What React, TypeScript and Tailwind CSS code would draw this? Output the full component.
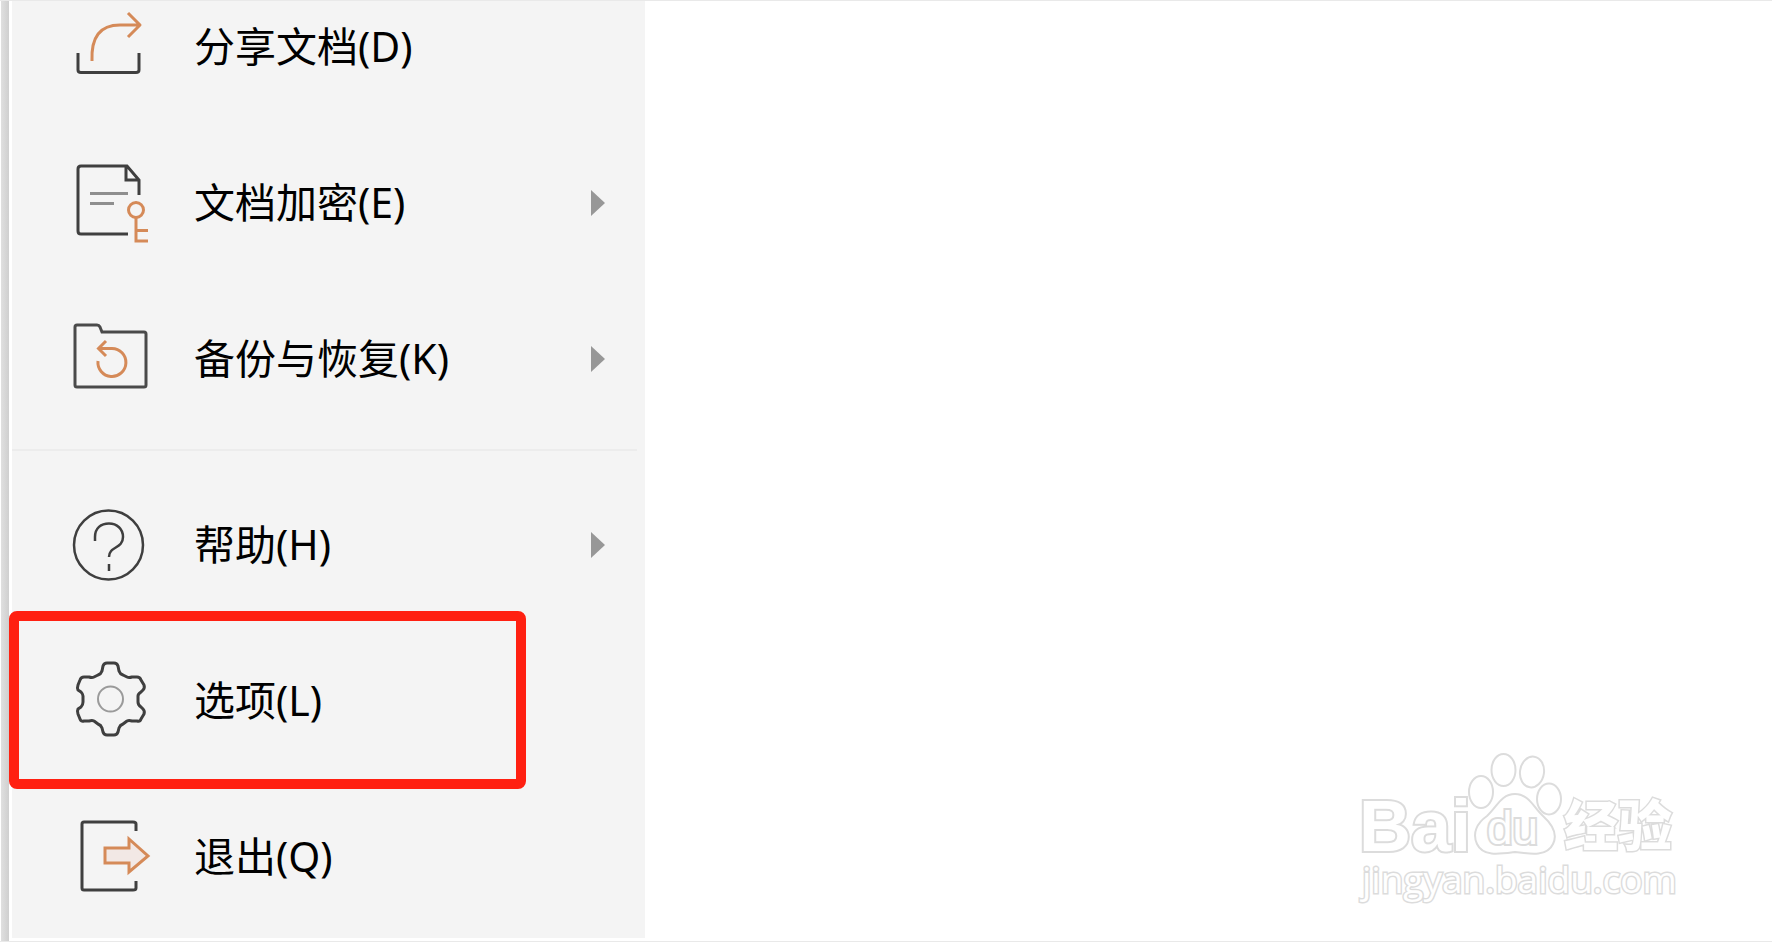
import { ReactNode } from "react"

const ink = "#3f3f3f"
const orange = "#d58a58"

function ShareIcon() {
  return (
    <svg viewBox="0 -4 120 100" className="h-[100px] w-[120px]" fill="none" strokeWidth="3" strokeLinejoin="round">
      <path d="M28 52V69Q28 71.500 31 71.500H86Q89 71.500 89 69V52" stroke={ink} />
      <path d="M42 60C41 36 50 24 70 24H90M78 12L90 24L78 36" stroke={orange} />
    </svg>
  )
}

function EncryptIcon() {
  return (
    <svg viewBox="0 3 120 100" className="h-[100px] w-[120px]" fill="none" strokeWidth="3">
      <path d="M78 84H31Q28 84 28 81V19Q28 16 31 16H77L89 30V45M76 16V30H89" stroke={ink} />
      <path d="M40 43.500H78M40 53.500H64" stroke="#8e8e8e" />
      <circle cx="86" cy="60" r="7.500" stroke={orange} />
      <path d="M86 67V91H98M86 80.500H98" stroke={orange} />
    </svg>
  )
}

function BackupIcon() {
  return (
    <svg viewBox="0 -1 120 100" className="h-[100px] w-[120px]" fill="none" strokeWidth="3">
      <path d="M27 15H47Q49 15 50 17L52 22H94Q96 22 96 24V75Q96 77 94 77H27Q25 77 25 75V17Q25 15 27 15Z" stroke="#4a4a4a" />
      <path d="M48 51A14 14 0 1 0 62 38.500H49M56 31L48.500 38.500L56 46" stroke={orange} />
    </svg>
  )
}

function HelpIcon() {
  return (
    <svg viewBox="0 0 120 100" className="h-[100px] w-[120px]" fill="none" strokeWidth="2.500">
      <circle cx="58.500" cy="50" r="34.500" stroke={ink} />
      <path d="M45 46V42C45 33 51 28.500 59 28.500C67 28.500 73 34 73 42C73 54 59 51 59 62M59 69V76" stroke={ink} />
    </svg>
  )
}

function GearIcon() {
  return (
    <svg viewBox="0 1 120 100" className="h-[100px] w-[120px]" fill="none" strokeWidth="3" strokeLinejoin="round">
      <path
        d="M57 13H64Q67 13 68 16L69 21Q70 24 73 25L77 27Q79 28 82 27L87 27Q90 27 91 30L94 35Q95 38 93 40L91 42Q88 44 88 46V52Q88 55 91 57L93 59Q95 61 94 64L91 69Q90 72 87 71L82 71Q79 70 77 71L73 74Q70 75 69 78L68 82Q67 85 64 85H57Q54 85 53 82L52 78Q51 75 48 74L44 71Q42 70 39 71L34 71Q31 72 30 69L28 64Q27 61 28 59L31 57Q33 55 33 52V46Q33 44 31 42L28 40Q27 38 28 35L30 30Q31 27 34 27L39 27Q42 28 44 27L48 25Q51 24 52 21L53 16Q54 13 57 13Z"
        stroke={ink}
      />
      <circle cx="60.500" cy="49" r="12.500" stroke="#9a9a9a" strokeWidth="2" />
    </svg>
  )
}

function ExitIcon() {
  return (
    <svg viewBox="0 0 120 100" className="h-[100px] w-[120px]" fill="none" strokeWidth="3">
      <path d="M86 24V17Q86 15 83 15H34Q32 15 32 17V81Q32 83 34 83H83Q86 83 86 81V74" stroke={ink} />
      <path d="M55 41H79V32L98 49L79 65V56H55Z" stroke={orange} fill="#f2e8e5" />
    </svg>
  )
}

function MenuItem({ icon, label, submenu, active }: { icon: ReactNode; label: string; submenu?: boolean; active?: boolean }) {
  return (
    <li className="relative">
      <button type="button" className="flex h-[156px] w-full items-center pl-[38px] pr-10 text-left">
        {icon}
        <span className="ml-6 flex-1 whitespace-nowrap pb-[2px] text-[41px] leading-[56px] text-black">{label}</span>
        {submenu && (
          <svg viewBox="0 0 14 26" className="h-[26px] w-[14px]">
            <path d="M0 0L14 13L0 26Z" fill="#979797" />
          </svg>
        )}
      </button>
      {active && <span className="pointer-events-none absolute -top-3 -left-[3px] h-[178px] w-[517px] rounded-lg border-10 border-[#ff2011]" />}
    </li>
  )
}

function Watermark() {
  return (
    <svg viewBox="0 0 360 190" className="h-[190px] w-[360px]" fill="#fff" stroke="#dcdcdc" strokeWidth="2" fontFamily="'Liberation Sans', 'Noto Sans CJK SC', sans-serif">
      <text x="19" y="121" fontSize="72" fontWeight="700" paintOrder="stroke" strokeWidth="4">Bai</text>
      <ellipse cx="141" cy="62" rx="12" ry="16" />
      <ellipse cx="163.500" cy="40" rx="12" ry="16" />
      <ellipse cx="192" cy="42" rx="12" ry="15.500" transform="rotate(8 192 42)" />
      <ellipse cx="209" cy="69" rx="12" ry="15.500" />
      <path d="M175 64C189 64 194 78 203 86C214 96 217 106 213 114C207 127 190 124 175 122C160 124 143 127 137 114C132 103 137 93 147 86C157 77 161 64 175 64Z" />
      <text x="147" y="114" fontSize="46" paintOrder="stroke" strokeWidth="4">du</text>
      <text x="224" y="116" fontSize="54" fontWeight="900" paintOrder="stroke" strokeWidth="3" fontFamily="'Noto Sans CJK SC', sans-serif">经验</text>
      <text x="22" y="163" fontSize="37" paintOrder="stroke" strokeWidth="3" fontFamily="'Open Sans', sans-serif">jingyan.baidu.com</text>
    </svg>
  )
}

export default function App() {
  return (
    <div className="flex min-h-screen border-y border-[#e9e9e9] bg-white font-['Noto_Sans','Noto_Sans_CJK_SC',sans-serif]">
      <nav className="flex w-[645px] shrink-0 overflow-hidden pl-px">
        <div className="w-2 bg-linear-to-r from-[#e0e0e0] to-[#cfcfcf]" />
        <div className="mb-[3px] flex-1 border-l-3 border-white bg-[#f4f4f4]">
          <ul className="-mt-[32px]">
            <MenuItem icon={<ShareIcon />} label="分享文档(D)" />
            <MenuItem icon={<EncryptIcon />} label="文档加密(E)" submenu />
            <MenuItem icon={<BackupIcon />} label="备份与恢复(K)" submenu />
          </ul>
          <hr className="mt-3 mr-2 mb-4 border-t-2 border-[#ececec]" />
          <ul>
            <MenuItem icon={<HelpIcon />} label="帮助(H)" submenu />
            <MenuItem icon={<GearIcon />} label="选项(L)" active />
            <MenuItem icon={<ExitIcon />} label="退出(Q)" />
          </ul>
        </div>
      </nav>
      <main className="flex flex-1 items-end justify-end pr-[72px] pb-[21px]">
        <Watermark />
      </main>
    </div>
  )
}
